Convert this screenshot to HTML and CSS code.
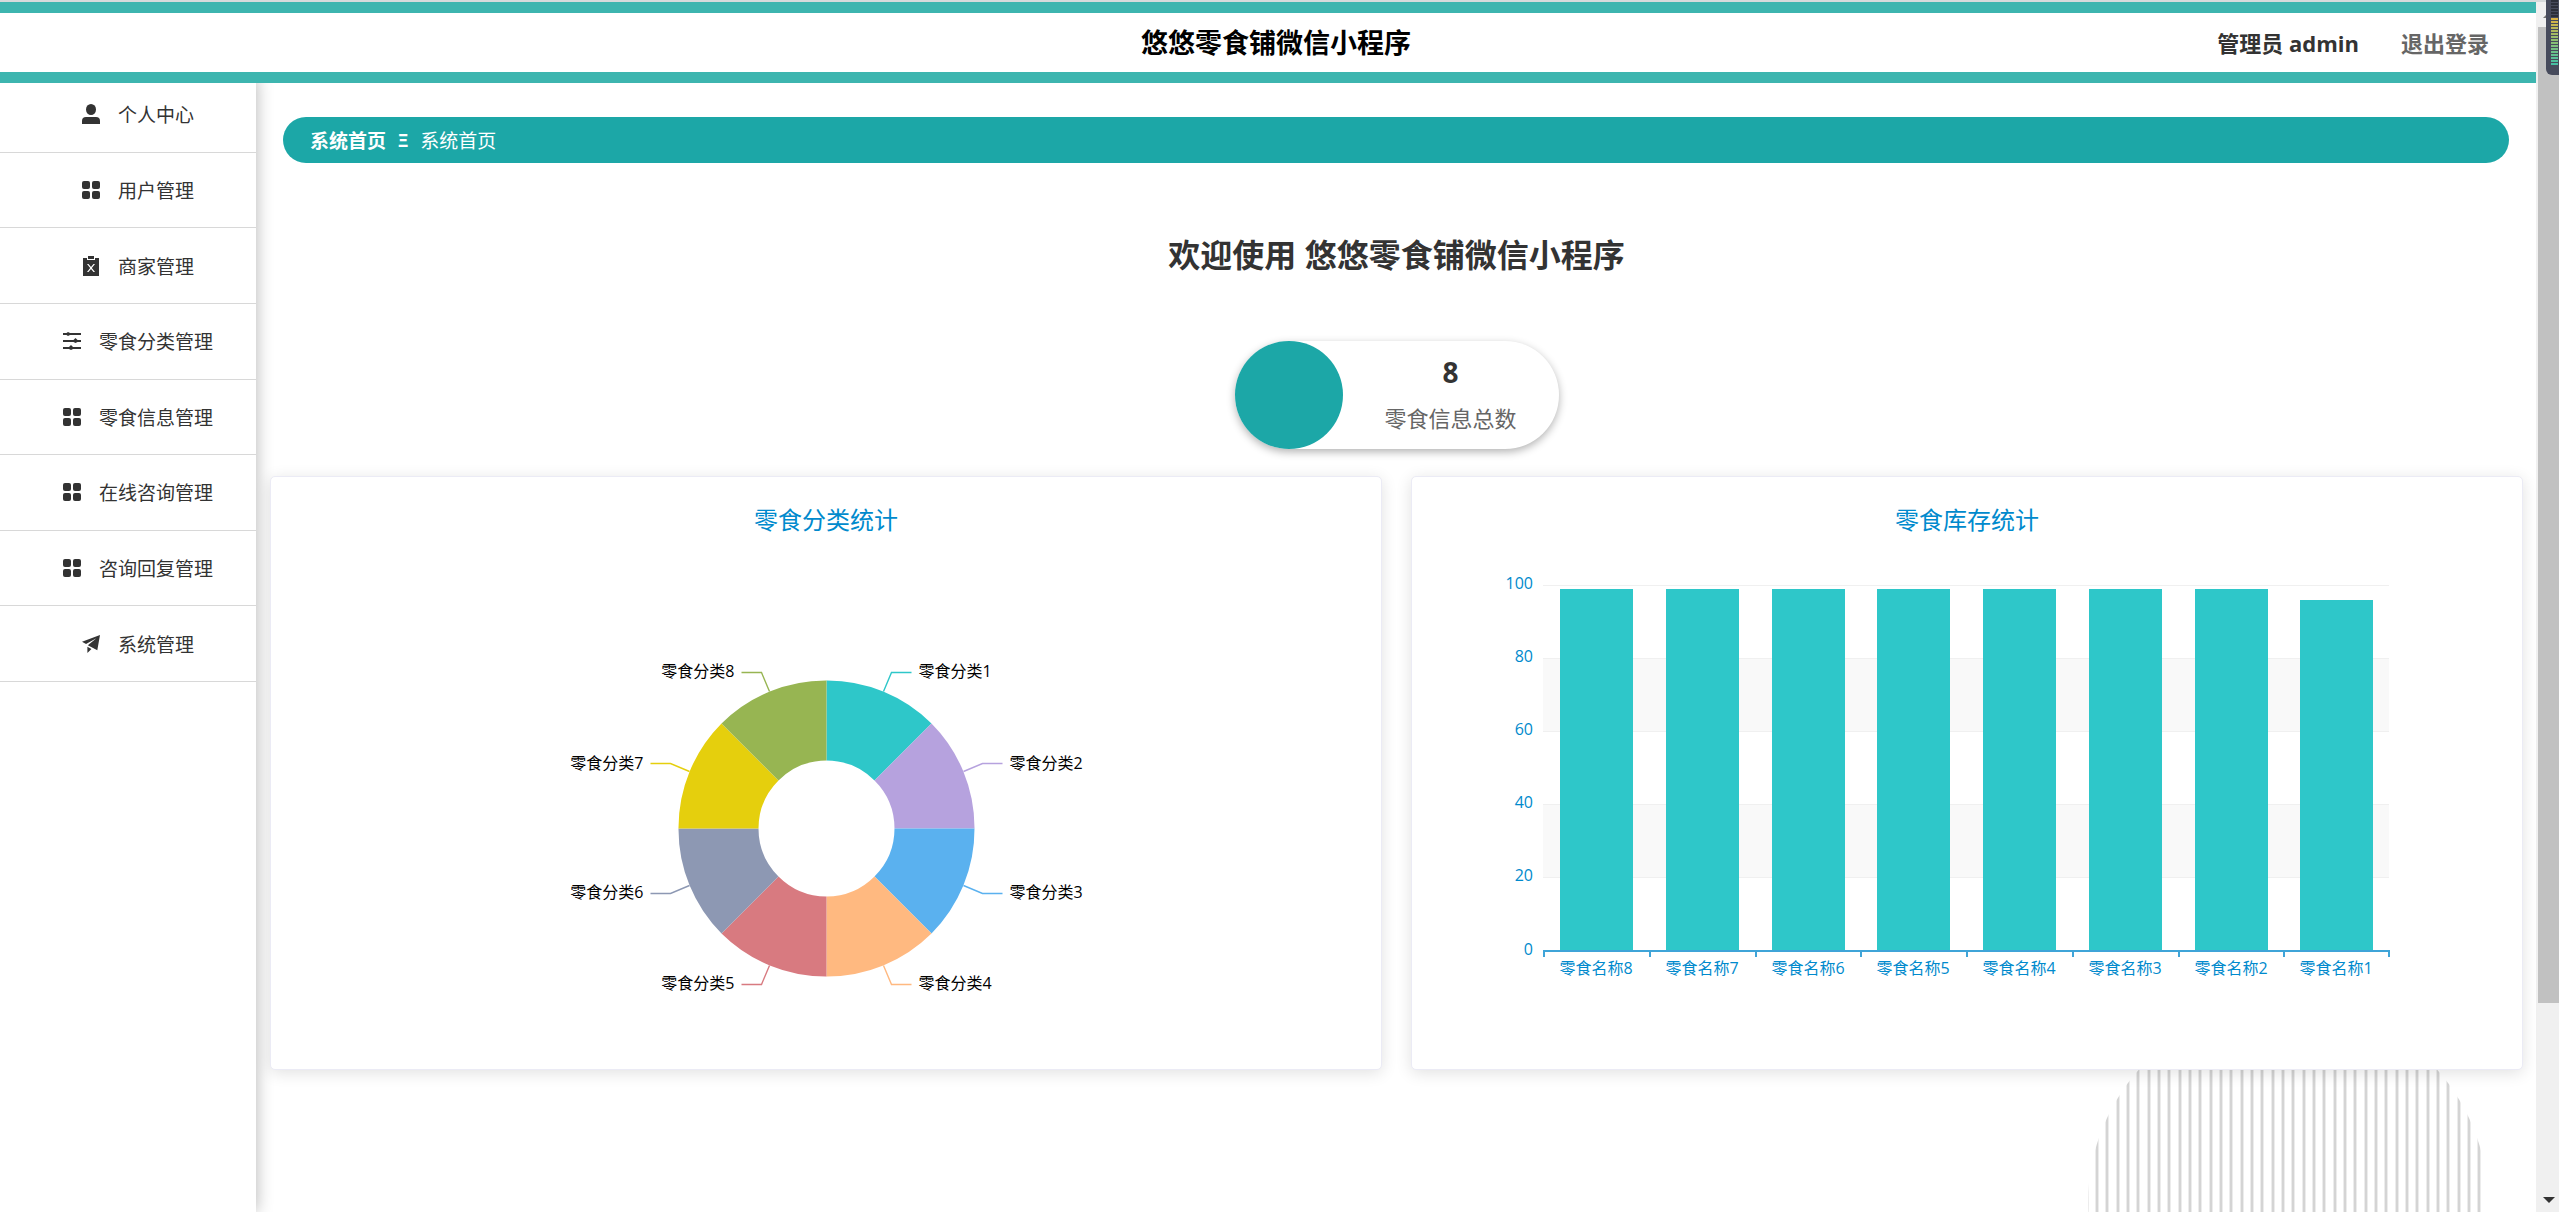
FILE: index.html
```html
<!DOCTYPE html>
<html lang="zh-CN">
<head>
<meta charset="utf-8">
<title>悠悠零食铺微信小程序</title>
<link rel="stylesheet" href="styles.css">
</head>
<body>
<svg class="sprite" aria-hidden="true">
  <symbol id="i-user" viewBox="0 0 18 20"><ellipse cx="9" cy="5.500" rx="5" ry="5.500"/><path d="M0 20v-3q0-4 4-4h10q4 0 4 4v3z"/></symbol>
  <symbol id="i-grid" viewBox="0 0 18 18"><rect width="8" height="8" rx="2"/><rect x="10" width="8" height="8" rx="2"/><rect y="10" width="8" height="8" rx="2"/><rect x="10" y="10" width="8" height="8" rx="2"/></symbol>
  <symbol id="i-board" viewBox="0 0 18 20"><path fill-rule="evenodd" d="M1 2h4v2h8V2h4v18H1zM5 8l3.200 4L5 16h1.500L9 13l2.500 3H13l-3.200-4L13 8h-1.500L9 11 6.500 8z"/><rect x="6" width="6" height="3"/></symbol>
  <symbol id="i-sliders" viewBox="0 0 18 18"><path d="M0 1h3.500L5 0l2 1h11v2H7L5 4 3.500 3H0zM0 8h10.500L12.500 6l2 2H18v2h-3.500l-2 1-2-1H0zM0 15h6l2-2 2 2h8v2h-8l-2 1-2-1H0z"/></symbol>
  <symbol id="i-plane" viewBox="0 0 20 20"><path d="M20 0L0 7.500l4.500 2.500L16 3.500 6.500 11.500 17 17zM6 13v7l4.500-4.500z"/></symbol>
</svg>
<div class="page">
  <header class="topbar">
    <h1 class="brand">悠悠零食铺微信小程序</h1>
    <div class="account"><span>管理员 admin</span><a class="logout" href="#">退出登录</a></div>
  </header>
  <div class="layout">
    <nav class="sidebar">
      <div class="menu">
        <a href="#"><svg class="icon"><use href="#i-user"/></svg>个人中心</a>
        <a href="#"><svg class="icon"><use href="#i-grid"/></svg>用户管理</a>
        <a href="#"><svg class="icon"><use href="#i-board"/></svg>商家管理</a>
        <a href="#"><svg class="icon"><use href="#i-sliders"/></svg>零食分类管理</a>
        <a href="#"><svg class="icon"><use href="#i-grid"/></svg>零食信息管理</a>
        <a href="#"><svg class="icon"><use href="#i-grid"/></svg>在线咨询管理</a>
        <a href="#"><svg class="icon"><use href="#i-grid"/></svg>咨询回复管理</a>
        <a href="#"><svg class="icon"><use href="#i-plane"/></svg>系统管理</a>
      </div>
    </nav>
    <main class="content">
      <svg class="stripes" viewBox="0 0 402 210" aria-hidden="true">
        <defs>
          <pattern id="lines" x="5" width="31" height="210" patternUnits="userSpaceOnUse">
            <path fill="#ececec" d="M3 0h4v210H3zM13 0h4v210h-4zM24 0h4v210h-4z"/>
            <path fill="#d4d4d4" d="M4 0h2v210H4zM14 0h2v210h-2zM25 0h2v210h-2z"/>
          </pattern>
        </defs>
        <circle cx="201" cy="201" r="200" fill="url(#lines)"/>
      </svg>
      <div class="crumbs"><a href="#">系统首页</a><span class="sep">Ξ</span><span>系统首页</span></div>
      <h2 class="welcome">欢迎使用 悠悠零食铺微信小程序</h2>
      <section class="stat">
        <div class="stat-dot"></div>
        <div class="stat-text"><strong>8</strong><span>零食信息总数</span></div>
      </section>
      <div class="cards">
        <section class="card">
          <svg class="chart" viewBox="0 0 1110 592">
            <text class="chart-title" x="555" y="52">零食分类统计</text>
            <g transform="translate(555.500 351.500)">
              <path fill="#2ec7c9" d="M0-148A148 148 0 0 1 105-105L48-48A68 68 0 0 0 0-68z"/>
              <path fill="#b6a2de" d="M105-105A148 148 0 0 1 148 0H68A68 68 0 0 0 48-48z"/>
              <path fill="#5ab1ef" d="M148 0A148 148 0 0 1 105 105L48 48A68 68 0 0 0 68 0z"/>
              <path fill="#ffb980" d="M105 105A148 148 0 0 1 0 148V68A68 68 0 0 0 48 48z"/>
              <path fill="#d87a80" d="M0 148A148 148 0 0 1-105 105L-48 48A68 68 0 0 0 0 68z"/>
              <path fill="#8d98b3" d="M-105 105A148 148 0 0 1-148 0H-68A68 68 0 0 0-48 48z"/>
              <path fill="#e5cf0d" d="M-148 0A148 148 0 0 1-105-105L-48-48A68 68 0 0 0-68 0z"/>
              <path fill="#97b552" d="M-105-105A148 148 0 0 1 0-148V-68A68 68 0 0 0-48-48z"/>
              <g class="leaders">
                <path stroke="#2ec7c9" d="M57-137L65-156H85"/>
                <path stroke="#b6a2de" d="M137-57L156-65H176"/>
                <path stroke="#5ab1ef" d="M137 57L156 65H176"/>
                <path stroke="#ffb980" d="M57 137L65 156H85"/>
                <path stroke="#d87a80" d="M-57 137L-65 156H-85"/>
                <path stroke="#8d98b3" d="M-137 57L-156 65H-176"/>
                <path stroke="#e5cf0d" d="M-137-57L-156-65H-176"/>
                <path stroke="#97b552" d="M-57-137L-65-156H-85"/>
              </g>
              <g class="pie-label">
                <text x="92" y="-152">零食分类1</text>
                <text x="183" y="-60">零食分类2</text>
                <text x="183" y="69">零食分类3</text>
                <text x="92" y="160">零食分类4</text>
              </g>
              <g class="pie-label end">
                <text x="-92" y="160">零食分类5</text>
                <text x="-183" y="69">零食分类6</text>
                <text x="-183" y="-60">零食分类7</text>
                <text x="-92" y="-152">零食分类8</text>
              </g>
            </g>
          </svg>
        </section>
        <section class="card">
          <svg class="chart" viewBox="0 0 1110 592">
            <text class="chart-title" x="555" y="52">零食库存统计</text>
            <path fill="#f9f9f9" d="M131 181h846v73H131zM131 327h846v73H131z"/>
            <path fill="#f0f0f0" d="M131 108h846v1H131zM131 181h846v1H131zM131 254h846v1H131zM131 327h846v1H131zM131 400h846v1H131z"/>
            <path fill="#2ec7c9" d="M148 112h73v361h-73zM254 112h73v361h-73zM360 112h73v361h-73zM465 112h73v361h-73zM571 112h73v361h-73zM677 112h73v361h-73zM783 112h73v361h-73zM888 123h73v350h-73z"/>
            <path fill="#3fa4d8" d="M131 473h847v2H131zM131 475h2v5h-2zM237 475h2v5h-2zM343 475h2v5h-2zM448 475h2v5h-2zM554 475h2v5h-2zM660 475h2v5h-2zM766 475h2v5h-2zM871 475h2v5h-2zM976 475h2v5h-2z"/>
            <g class="axis end">
              <text x="121" y="112">100</text>
              <text x="121" y="185">80</text>
              <text x="121" y="258">60</text>
              <text x="121" y="331">40</text>
              <text x="121" y="404">20</text>
              <text x="121" y="478">0</text>
            </g>
            <g class="axis mid">
              <text x="184" y="497">零食名称8</text>
              <text x="290" y="497">零食名称7</text>
              <text x="396" y="497">零食名称6</text>
              <text x="501" y="497">零食名称5</text>
              <text x="607" y="497">零食名称4</text>
              <text x="713" y="497">零食名称3</text>
              <text x="819" y="497">零食名称2</text>
              <text x="924" y="497">零食名称1</text>
            </g>
          </svg>
        </section>
      </div>
    </main>
  </div>
</div>
<div class="scrollbar" aria-hidden="true">
  <svg class="arrow" viewBox="0 0 12 6"><path fill="#777" d="M0 6l6-6 6 6z"/></svg>
  <div class="thumb"></div>
  <svg class="arrow" viewBox="0 0 12 6"><path fill="#333" d="M0 0h12L6 6z"/></svg>
</div>
<div class="meter" aria-hidden="true"><div class="meter-bars"></div></div>
</body>
</html>
```
FILE: styles.css
```css
* { box-sizing: border-box; }
body {
  margin: 0;
  display: flex;
  min-height: 100vh;
  border-top: 2px solid #d6dadb;
  background: #fff;
  color: #333;
  font-family: "Open Sans", "Noto Sans CJK SC", sans-serif;
  font-size: 19px;
}
a { color: inherit; text-decoration: none; }
.sprite { position: absolute; width: 0; height: 0; }
.page { flex: 1; display: flex; flex-direction: column; min-width: 0; }

.topbar {
  position: relative;
  z-index: 1;
  display: grid;
  grid-template-columns: 1fr auto 1fr;
  align-items: center;
  height: 81px;
  padding: 0 47px 0 63px;
  border: solid #3db5af;
  border-width: 11px 0;
  background: #fff;
}
.brand { grid-column: 2; margin: 0; color: #000; font-size: 27px; line-height: 40px; }
.account { display: flex; justify-content: flex-end; gap: 42px; font-size: 22px; font-weight: 700; line-height: 32px; }
.logout { color: #666; }

.layout { flex: 1; display: flex; margin-top: -6px; }
.sidebar { flex: none; width: 256px; box-shadow: 0 0 16px rgba(0, 0, 0, .3); }
.menu { display: grid; grid-template-rows: repeat(8, 1fr); height: 605px; }
.menu a {
  display: flex;
  align-items: center;
  justify-content: center;
  gap: 18px;
  padding-left: 20px;
  border-bottom: 1px solid #d8d8d8;
}
.icon { width: 18px; height: 20px; fill: #333; }

.content { flex: 1; min-width: 0; position: relative; padding: 40px 13px 40px 14px; }
.crumbs {
  display: flex;
  align-items: center;
  gap: 12px;
  height: 46px;
  margin: 0 14px 0 13px;
  padding: 0 27px;
  border-radius: 23px;
  background: #1ca7a7;
  color: #fff;
}
.crumbs a, .sep { font-weight: 700; }
.sep { font-size: 18px; }
.welcome { margin: 68px 0 62px; text-align: center; font-size: 32px; line-height: 48px; }
.stat {
  display: flex;
  width: 324px;
  height: 108px;
  margin: 0 auto 27px;
  border-radius: 54px;
  background: #fff;
  box-shadow: 0 3px 8px rgba(0, 0, 0, .3);
}
.stat-dot { width: 108px; border-radius: 50%; background: #1ca7a7; }
.stat-text { flex: 1; display: flex; flex-direction: column; align-items: center; justify-content: center; }
.stat-text strong { font-size: 28px; line-height: 46px; }
.stat-text span { color: #666; font-size: 22px; line-height: 46px; }

.cards { position: relative; display: grid; grid-template-columns: 1fr 1fr; gap: 29px; }
.card { border: 1px solid #ebebf5; border-radius: 5px; background: #fff; box-shadow: 0 3px 16px rgba(0, 0, 0, .12); }
.chart { display: block; width: 100%; }
.chart-title { fill: #008acd; font-size: 24px; text-anchor: middle; }
.pie-label { fill: #000; font-size: 16px; }
.axis { fill: #008acd; font-size: 16px; }
.end { text-anchor: end; }
.mid { text-anchor: middle; }
.leaders { fill: none; stroke-width: 1.4; }
.stripes { position: absolute; right: 47px; bottom: 0; width: 402px; height: 210px; }

.scrollbar {
  flex: none;
  display: flex;
  flex-direction: column;
  align-items: center;
  gap: 9px;
  width: 23px;
  padding: 10px 0 9px 2px;
  background: #f0f0f0;
}
.arrow { width: 12px; height: 6px; }
.thumb { width: 100%; height: 976px; background: #c1c1c1; }
.scrollbar .arrow:last-child { margin-top: auto; }
.meter {
  position: absolute;
  top: 0;
  right: 0;
  width: 13px;
  height: 75px;
  padding: 0 1px 10px 5px;
  border-radius: 0 0 0 6px;
  background: #474b5c;
}
.meter-bars {
  height: 100%;
  background:
    repeating-linear-gradient(transparent 0 2px, #474b5c 2px 3px),
    linear-gradient(#2c2f3a 17px, #e0b040 17px, #8fc070 40px, #45bfa5 65px);
}
```
